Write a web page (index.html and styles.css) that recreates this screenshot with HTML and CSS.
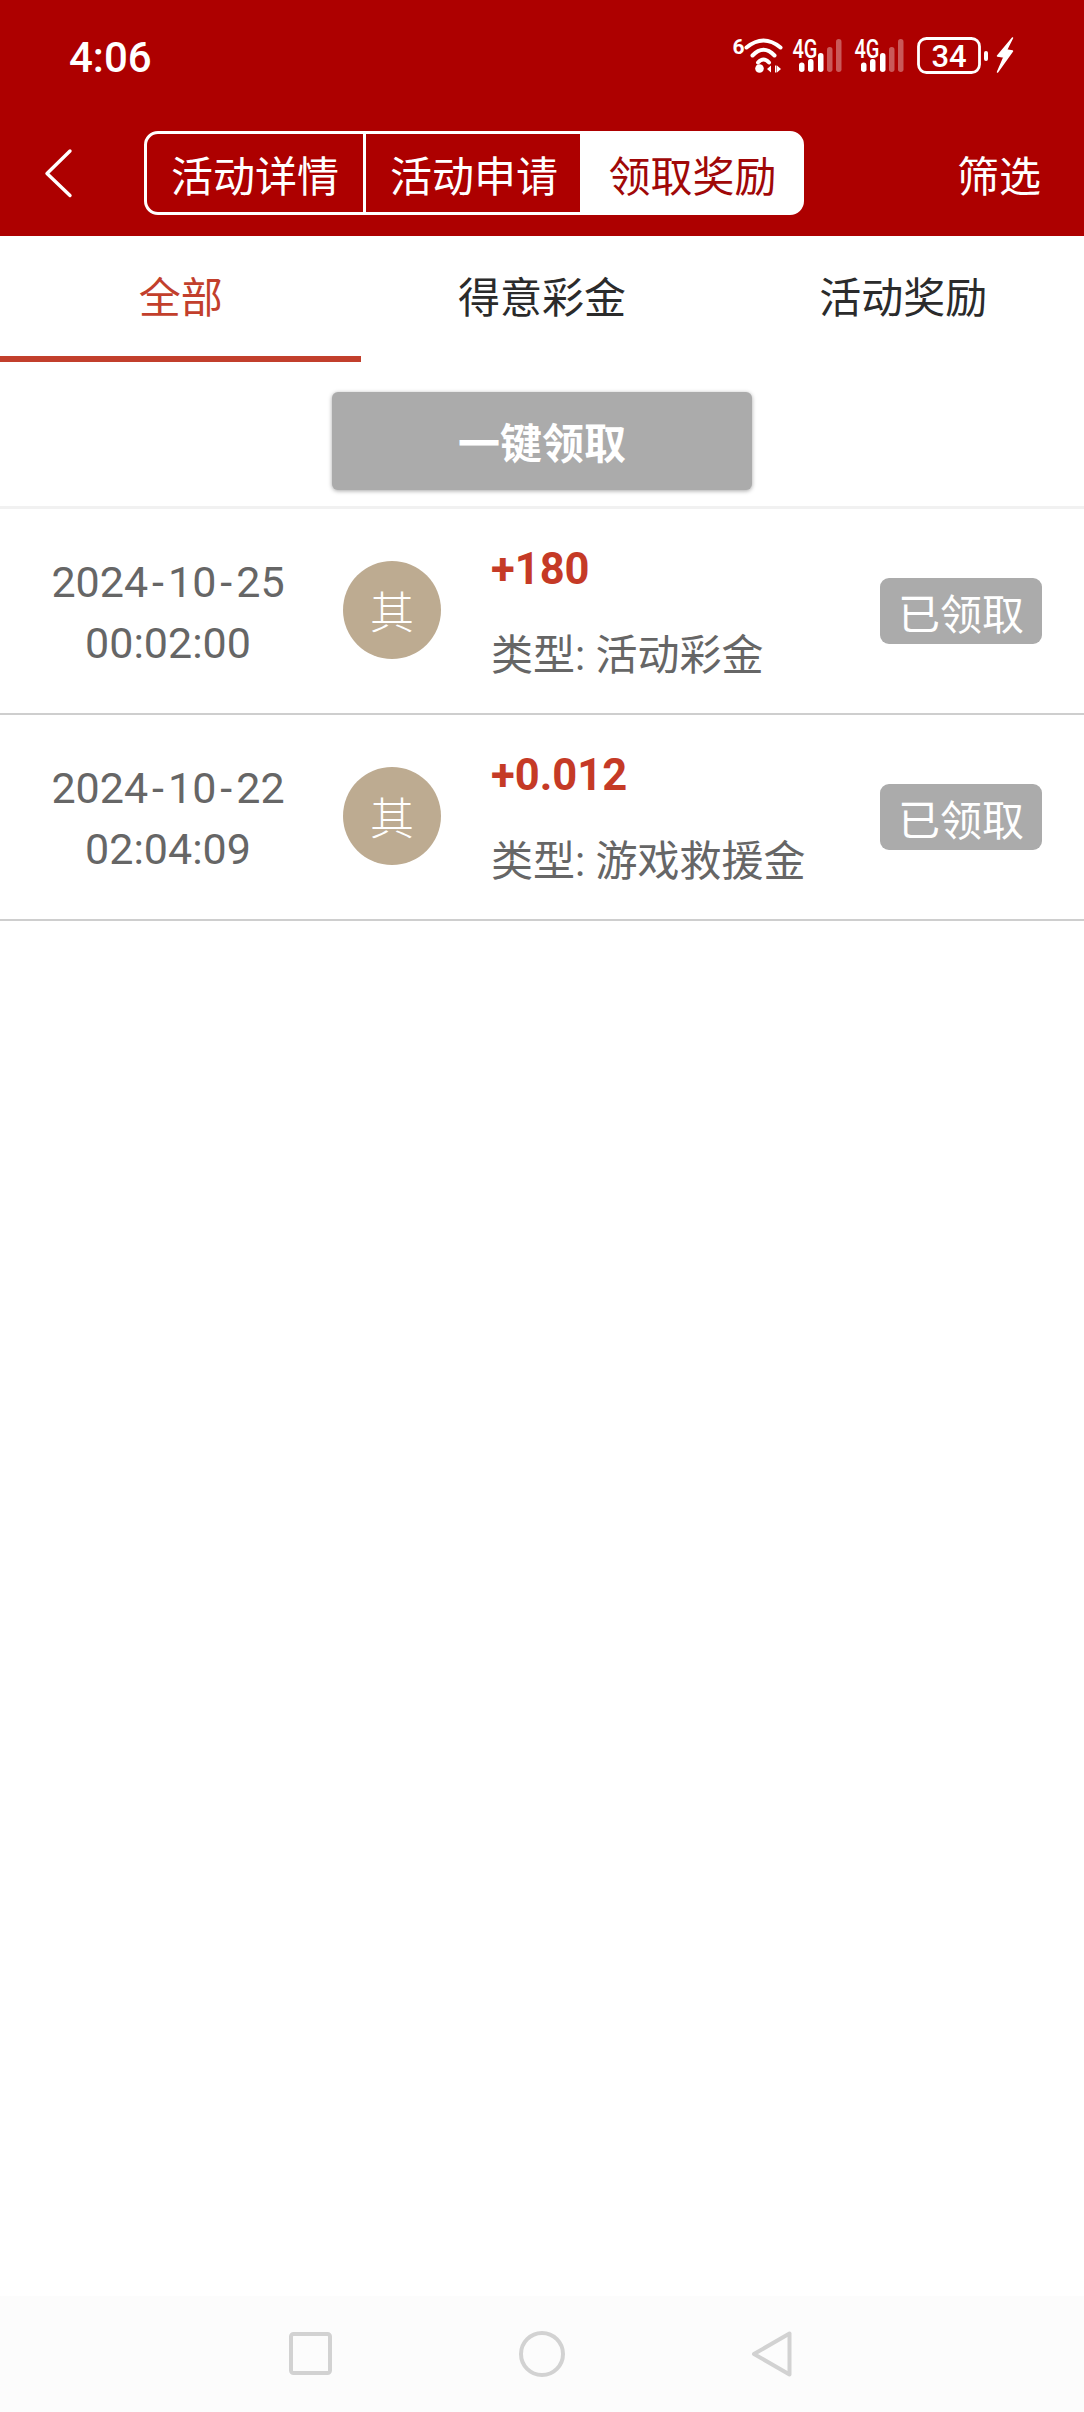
FILE: index.html
```html
<!DOCTYPE html>
<html lang="zh-CN">
<head>
<meta charset="utf-8">
<title>领取奖励</title>
<link rel="stylesheet" href="styles.css">
</head>
<body>
<div class="screen">
  <header class="header">
    <div class="status">
      <span class="time">4:06</span>
      <svg class="status-icons" width="287" height="58" viewBox="728 26 287 58">
        <text class="s-txt s-bold" x="732.500" y="53.500" font-size="21">6</text>
        <g fill="none" stroke="#fff" stroke-width="4" stroke-linecap="round">
          <path d="M746.500 47.500Q763.500 33.500 780.500 47.500"/>
          <path d="M752.500 55.500Q763.500 44 774.500 55.500"/>
          <path d="M758 62.500Q763.500 56.500 769 62.500"/>
        </g>
        <circle cx="759.500" cy="68.500" r="4.300" fill="#fff"/>
        <path d="M771 65.500v7l-4-3.500zM775 65.500v7h1.500v-7zM777 65.500v7l4-3.500z" fill="#fff"/>
        <g>
          <text class="s-txt" x="792.500" y="58" font-size="25" textLength="25" lengthAdjust="spacingAndGlyphs">4G</text>
          <rect x="799" y="62.500" width="5.500" height="9.500" rx="2.700" fill="#fff"/>
          <rect x="808" y="59" width="5.500" height="13" rx="2.700" fill="#fff"/>
          <rect x="818" y="53" width="5.500" height="19" rx="2.700" fill="#fff"/>
          <rect x="827" y="47" width="5.500" height="25" rx="2.700" fill="#fff" opacity=".35"/>
          <rect x="836" y="39" width="5.500" height="33" rx="2.700" fill="#fff" opacity=".35"/>
        </g>
        <g>
          <text class="s-txt" x="854.500" y="58" font-size="25" textLength="25" lengthAdjust="spacingAndGlyphs">4G</text>
          <rect x="861" y="62.500" width="5.500" height="9.500" rx="2.700" fill="#fff"/>
          <rect x="870" y="59" width="5.500" height="13" rx="2.700" fill="#fff"/>
          <rect x="880" y="53" width="5.500" height="19" rx="2.700" fill="#fff"/>
          <rect x="889" y="47" width="5.500" height="25" rx="2.700" fill="#fff" opacity=".35"/>
          <rect x="898" y="39" width="5.500" height="33" rx="2.700" fill="#fff" opacity=".35"/>
        </g>
        <rect x="918.500" y="38.500" width="61" height="34" rx="8" fill="none" stroke="#fff" stroke-width="2.800"/>
        <text class="s-txt" x="949" y="67" font-size="31" text-anchor="middle">34</text>
        <rect x="984" y="51" width="4" height="10" rx="2" fill="#fff"/>
        <path d="M1012.500 38L997.500 56L1004 57L997.500 72L1012.500 51L1006.500 50Z" fill="#fff" stroke="#fff" stroke-width="1.500" stroke-linejoin="round"/>
      </svg>
    </div>
    <div class="navbar">
      <svg class="back" width="30" height="50" viewBox="0 0 30 50"><path d="M27 3L4 25.500L27 47.500" fill="none" stroke="#fff" stroke-width="3.400" stroke-linecap="round" stroke-linejoin="round"/></svg>
      <div class="seg">
        <span class="seg-item seg-first">活动详情</span>
        <span class="seg-item seg-mid">活动申请</span>
        <span class="seg-item seg-on">领取奖励</span>
      </div>
      <span class="filter">筛选</span>
    </div>
  </header>
  <nav class="tabs">
    <span class="tab tab-on">全部</span>
    <span class="tab">得意彩金</span>
    <span class="tab">活动奖励</span>
  </nav>
  <div class="claim-wrap"><span class="claim">一键领取</span></div>
  <main class="list">
    <div class="row">
      <div class="date">2024<span class="dash">-</span>10<span class="dash">-</span>25<br>00:02:00</div>
      <div class="avatar">其</div>
      <div class="info">
        <div class="amount">+180</div>
        <div class="type">类型: 活动彩金</div>
      </div>
      <span class="badge">已领取</span>
    </div>
    <div class="row">
      <div class="date">2024<span class="dash">-</span>10<span class="dash">-</span>22<br>02:04:09</div>
      <div class="avatar">其</div>
      <div class="info">
        <div class="amount">+0.012</div>
        <div class="type">类型: 游戏救援金</div>
      </div>
      <span class="badge">已领取</span>
    </div>
  </main>
  <footer class="sysnav">
    <svg width="44" height="44" viewBox="0 0 44 44"><rect x="2" y="2" width="39" height="39" rx="2.500" fill="none" stroke="#d2d2d2" stroke-width="4"/></svg>
    <svg width="46" height="48" viewBox="0 0 46 48"><circle cx="23" cy="24" r="21" fill="none" stroke="#d2d2d2" stroke-width="4"/></svg>
    <svg width="42" height="48" viewBox="0 0 42 48"><path d="M38.500 3.500V44.500L3 24Z" fill="none" stroke="#d2d2d2" stroke-width="4" stroke-linejoin="round"/></svg>
  </footer>
</div>
</body>
</html>
```

FILE: styles.css
```css
* { box-sizing: border-box; }
html, body { margin: 0; padding: 0; }
body { width: 1084px; height: 2412px; overflow: hidden; background: #fff; font-family: Roboto, "Noto Sans CJK SC", sans-serif; }
.screen { width: 1084px; height: 2412px; display: flex; flex-direction: column; }

.header { height: 236px; background: #ad0000; color: #fff; flex: none; }
.status { height: 131px; padding: 26px 69px 0 69px; display: flex; justify-content: space-between; align-items: flex-start; }
.time { font-size: 42px; font-weight: 500; line-height: 42px; padding-top: 11px; }
.s-txt { fill: #fff; font-family: Roboto, sans-serif; font-weight: 500; }
.s-bold { font-weight: 700; }
.status-icons { display: block; flex: none; }

.navbar { height: 84px; display: flex; align-items: center; padding-left: 43px; }
.back { flex: none; margin-right: 71px; }
.seg { width: 660px; height: 84px; display: flex; border-radius: 14px; border: 3px solid #fff; font-size: 42px; flex: none; background: linear-gradient(90deg, transparent 66%, #fff 66%) border-box; }
.seg-item { display: flex; align-items: center; justify-content: center; height: 100%; }
.seg-first { width: 219px; border-right: 3px solid #fff; }
.seg-mid { width: 216px; }
.seg-on { flex: 1; background: #fff; color: #a00808; border-radius: 0 11px 11px 0; padding-left: 2px; }
.filter { font-size: 42px; margin-left: auto; padding-right: 43px; }

.tabs { height: 126px; display: flex; flex: none; }
.tab { flex: 1; display: flex; align-items: center; justify-content: center; font-size: 42px; color: #2b2b2b; border-bottom: 6px solid transparent; padding-bottom: 4px; }
.tab-on { color: #c23f2c; border-bottom-color: #c23f2c; }

.claim-wrap { height: 144px; padding-top: 30px; display: flex; justify-content: center; align-items: flex-start; flex: none; }
.claim { width: 420px; height: 98px; padding-bottom: 2px; background: #ababab; border-radius: 6px; color: #fff; font-size: 42px; font-weight: 700; display: flex; align-items: center; justify-content: center; box-shadow: 0 1px 4px rgba(0,0,0,.35); }

.list { border-top: 3px solid #f1f1f1; flex: none; }
.row { height: 206px; border-bottom: 2px solid #cecece; display: flex; align-items: center; }
.date { width: 336px; margin-right: 7px; padding-top: 3px; text-align: center; font-size: 43px; line-height: 61px; color: #666; flex: none; }
.dash { margin: 0 4px; }
.avatar { width: 98px; height: 98px; border-radius: 50%; background: #bdab91; color: #fff; font-size: 44px; font-weight: 300; display: flex; align-items: center; justify-content: center; margin: 0 50px 2px 0; padding-bottom: 1px; flex: none; }
.info { flex: 1; min-width: 0; padding-top: 3px; }
.amount { font-size: 43.500px; font-weight: 700; line-height: 86px; color: #c53a26; }
.type { font-size: 42px; line-height: 86px; color: #666; }
.badge { width: 162px; height: 66px; border-radius: 9px; background: #ababab; color: #fff; font-size: 42px; display: flex; align-items: center; justify-content: center; margin-right: 42px; flex: none; }

.sysnav { margin-top: auto; height: 116px; background: #fcfcfc; display: flex; align-items: center; padding-left: 289px; gap: 186px; flex: none; }
.sysnav svg { display: block; flex: none; }
```
